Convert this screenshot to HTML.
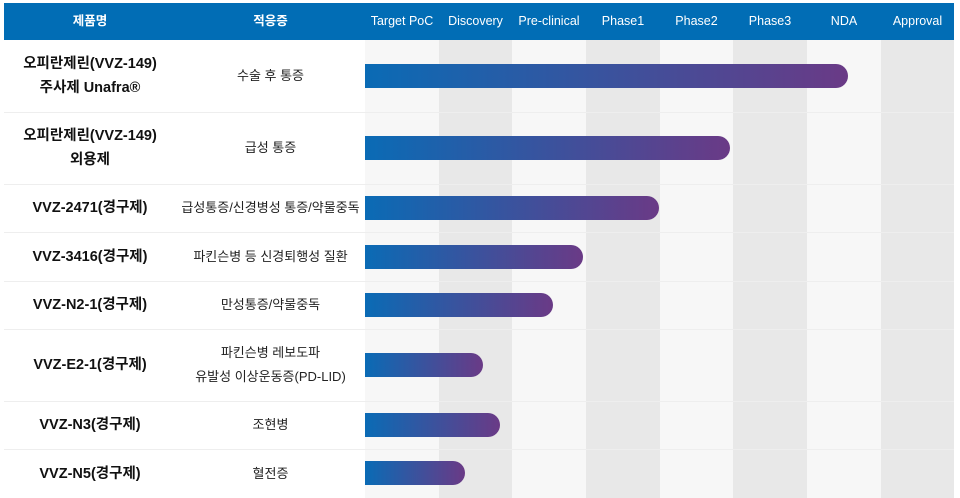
<!DOCTYPE html>
<html><head><meta charset="utf-8"><style>
*{margin:0;padding:0;box-sizing:border-box}
body{width:960px;height:498px;background:#fff;position:relative;overflow:hidden;font-family:"Liberation Sans","Noto Sans CJK KR",sans-serif}
.hdr{position:absolute;left:4px;top:3px;width:950px;height:37px;background:#016db5}
.h{position:absolute;top:3px;height:37px;line-height:37px;color:#fff;font-size:12.5px;text-align:center}
.col{position:absolute;top:40px;height:458px;width:74px}
.sep{position:absolute;left:4px;width:950px;height:1px;background:#eee}
.p{position:absolute;left:4px;width:172px;text-align:center;font-weight:bold;font-size:14.5px;color:#111;line-height:24px;display:flex;align-items:center;justify-content:center}
.i{position:absolute;left:176px;width:189px;text-align:center;font-size:13px;color:#222;line-height:24px;display:flex;align-items:center;justify-content:center}
.b{position:absolute;left:365px;height:24px;border-radius:0 12px 12px 0;background:linear-gradient(90deg,#0a6bb5,#6a3a86)}
</style></head><body>
<div class="col" style="left:365px;background:#f7f7f7"></div>
<div class="col" style="left:439px;background:#e8e8e8"></div>
<div class="col" style="left:512px;background:#f7f7f7"></div>
<div class="col" style="left:586px;background:#e8e8e8"></div>
<div class="col" style="left:660px;background:#f7f7f7"></div>
<div class="col" style="left:733px;background:#e8e8e8"></div>
<div class="col" style="left:807px;background:#f7f7f7"></div>
<div class="col" style="left:881px;background:#e8e8e8;width:73px"></div>
<div class="hdr"></div>
<div class="h" style="left:4px;width:172px;font-weight:bold">제품명</div>
<div class="h" style="left:176px;width:189px;font-weight:bold">적응증</div>
<div class="h" style="left:365px;width:74px">Target PoC</div>
<div class="h" style="left:439px;width:73px">Discovery</div>
<div class="h" style="left:512px;width:74px">Pre-clinical</div>
<div class="h" style="left:586px;width:74px">Phase1</div>
<div class="h" style="left:660px;width:73px">Phase2</div>
<div class="h" style="left:733px;width:74px">Phase3</div>
<div class="h" style="left:807px;width:74px">NDA</div>
<div class="h" style="left:881px;width:73px">Approval</div>
<div class="sep" style="top:112px"></div><div class="sep" style="top:184px"></div><div class="sep" style="top:232px"></div><div class="sep" style="top:281px"></div><div class="sep" style="top:329px"></div><div class="sep" style="top:401px"></div><div class="sep" style="top:449px"></div>
<div class="p" style="top:40px;height:72px">오피란제린(VVZ-149)<br>주사제 Unafra®</div>
<div class="i" style="top:40px;height:72px">수술 후 통증</div>
<div class="b" style="top:64px;width:483px"></div>
<div class="p" style="top:112px;height:72px">오피란제린(VVZ-149)<br>외용제</div>
<div class="i" style="top:112px;height:72px">급성 통증</div>
<div class="b" style="top:136px;width:365px"></div>
<div class="p" style="top:184px;height:48px">VVZ-2471(경구제)</div>
<div class="i" style="top:184px;height:48px">급성통증/신경병성 통증/약물중독</div>
<div class="b" style="top:196px;width:294px"></div>
<div class="p" style="top:232px;height:49px">VVZ-3416(경구제)</div>
<div class="i" style="top:232px;height:49px">파킨슨병 등 신경퇴행성 질환</div>
<div class="b" style="top:245px;width:218px"></div>
<div class="p" style="top:281px;height:48px">VVZ-N2-1(경구제)</div>
<div class="i" style="top:281px;height:48px">만성통증/약물중독</div>
<div class="b" style="top:293px;width:188px"></div>
<div class="p" style="top:329px;height:72px">VVZ-E2-1(경구제)</div>
<div class="i" style="top:329px;height:72px">파킨슨병 레보도파<br>유발성 이상운동증(PD-LID)</div>
<div class="b" style="top:353px;width:118px"></div>
<div class="p" style="top:401px;height:48px">VVZ-N3(경구제)</div>
<div class="i" style="top:401px;height:48px">조현병</div>
<div class="b" style="top:413px;width:135px"></div>
<div class="p" style="top:449px;height:49px">VVZ-N5(경구제)</div>
<div class="i" style="top:449px;height:49px">혈전증</div>
<div class="b" style="top:461px;width:100px"></div>
</body></html>
